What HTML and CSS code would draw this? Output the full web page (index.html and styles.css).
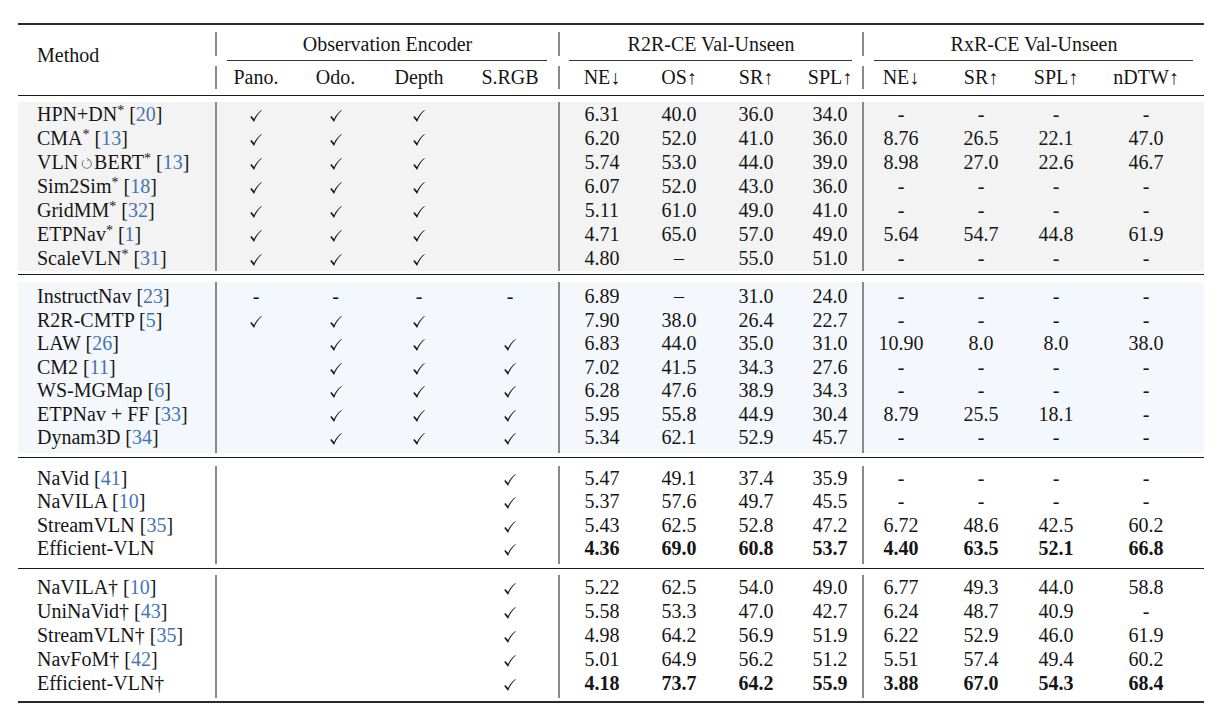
FILE: index.html
```html
<!DOCTYPE html>
<html>
<head>
<meta charset="utf-8">
<title>Results table</title>
<link rel="stylesheet" href="styles.css">
</head>
<body>
<svg class="defs" width="0" height="0">
  <defs>
    <symbol id="ck" viewBox="0 0 10 10">
      <path d="M0.2 5.8 L3.4 9.9 C4.9 5.9 7 2.6 9.8 0.4 L9.6 0.1 C6.9 1.9 4.9 4.6 3.4 7.5 L1.1 5.1 Z"/>
    </symbol>
  </defs>
</svg>
<div class="table">
  <div class="rule-top"></div>
  <div class="thead">
    <div class="h-method">Method</div>
    <div class="h-grp"><div class="lbl">Observation Encoder</div><div class="cmid c1"></div></div>
    <div class="h-grp"><div class="lbl">R2R-CE Val-Unseen</div><div class="cmid c2"></div></div>
    <div class="h-grp"><div class="lbl">RxR-CE Val-Unseen</div><div class="cmid c3"></div></div>
    <div class="h-sub b"><span>Pano.</span></div>
    <div class="h-sub"><span>Odo.</span></div>
    <div class="h-sub"><span>Depth</span></div>
    <div class="h-sub"><span>S.RGB</span></div>
    <div class="h-sub b"><span>NE↓</span></div>
    <div class="h-sub"><span>OS↑</span></div>
    <div class="h-sub"><span>SR↑</span></div>
    <div class="h-sub"><span>SPL↑</span></div>
    <div class="h-sub b"><span>NE↓</span></div>
    <div class="h-sub"><span>SR↑</span></div>
    <div class="h-sub"><span>SPL↑</span></div>
    <div class="h-sub"><span>nDTW↑</span></div>
  </div>
  <div class="rule-mid"></div>

  <div class="group g1">
    <div class="row"><div class="c m">HPN+DN<span class="ast">*</span> [<span class="ref">20</span>]</div><div class="c b"><svg class="ck"><use href="#ck"/></svg></div><div class="c"><svg class="ck"><use href="#ck"/></svg></div><div class="c"><svg class="ck"><use href="#ck"/></svg></div><div class="c"></div><div class="c b">6.31</div><div class="c">40.0</div><div class="c">36.0</div><div class="c">34.0</div><div class="c b">-</div><div class="c">-</div><div class="c">-</div><div class="c">-</div></div>
    <div class="row"><div class="c m">CMA<span class="ast">*</span> [<span class="ref">13</span>]</div><div class="c b"><svg class="ck"><use href="#ck"/></svg></div><div class="c"><svg class="ck"><use href="#ck"/></svg></div><div class="c"><svg class="ck"><use href="#ck"/></svg></div><div class="c"></div><div class="c b">6.20</div><div class="c">52.0</div><div class="c">41.0</div><div class="c">36.0</div><div class="c b">8.76</div><div class="c">26.5</div><div class="c">22.1</div><div class="c">47.0</div></div>
    <div class="row"><div class="c m">VLN<svg class="rec" viewBox="0 0 10 10"><path d="M6.8 1.3 A4.2 4.2 0 1 1 2.4 2.1" fill="none" stroke="#555" stroke-width="0.75"/><path d="M5.3 0.3 L7.1 1.3 L5.9 2.8" fill="none" stroke="#555" stroke-width="0.75"/></svg>BERT<span class="ast">*</span> [<span class="ref">13</span>]</div><div class="c b"><svg class="ck"><use href="#ck"/></svg></div><div class="c"><svg class="ck"><use href="#ck"/></svg></div><div class="c"><svg class="ck"><use href="#ck"/></svg></div><div class="c"></div><div class="c b">5.74</div><div class="c">53.0</div><div class="c">44.0</div><div class="c">39.0</div><div class="c b">8.98</div><div class="c">27.0</div><div class="c">22.6</div><div class="c">46.7</div></div>
    <div class="row"><div class="c m">Sim2Sim<span class="ast">*</span> [<span class="ref">18</span>]</div><div class="c b"><svg class="ck"><use href="#ck"/></svg></div><div class="c"><svg class="ck"><use href="#ck"/></svg></div><div class="c"><svg class="ck"><use href="#ck"/></svg></div><div class="c"></div><div class="c b">6.07</div><div class="c">52.0</div><div class="c">43.0</div><div class="c">36.0</div><div class="c b">-</div><div class="c">-</div><div class="c">-</div><div class="c">-</div></div>
    <div class="row"><div class="c m">GridMM<span class="ast">*</span> [<span class="ref">32</span>]</div><div class="c b"><svg class="ck"><use href="#ck"/></svg></div><div class="c"><svg class="ck"><use href="#ck"/></svg></div><div class="c"><svg class="ck"><use href="#ck"/></svg></div><div class="c"></div><div class="c b">5.11</div><div class="c">61.0</div><div class="c">49.0</div><div class="c">41.0</div><div class="c b">-</div><div class="c">-</div><div class="c">-</div><div class="c">-</div></div>
    <div class="row"><div class="c m">ETPNav<span class="ast">*</span> [<span class="ref">1</span>]</div><div class="c b"><svg class="ck"><use href="#ck"/></svg></div><div class="c"><svg class="ck"><use href="#ck"/></svg></div><div class="c"><svg class="ck"><use href="#ck"/></svg></div><div class="c"></div><div class="c b">4.71</div><div class="c">65.0</div><div class="c">57.0</div><div class="c">49.0</div><div class="c b">5.64</div><div class="c">54.7</div><div class="c">44.8</div><div class="c">61.9</div></div>
    <div class="row"><div class="c m">ScaleVLN<span class="ast">*</span> [<span class="ref">31</span>]</div><div class="c b"><svg class="ck"><use href="#ck"/></svg></div><div class="c"><svg class="ck"><use href="#ck"/></svg></div><div class="c"><svg class="ck"><use href="#ck"/></svg></div><div class="c"></div><div class="c b">4.80</div><div class="c">–</div><div class="c">55.0</div><div class="c">51.0</div><div class="c b">-</div><div class="c">-</div><div class="c">-</div><div class="c">-</div></div>
  </div>
  <div class="rule-mid"></div>

  <div class="group g2">
    <div class="row"><div class="c m">InstructNav [<span class="ref">23</span>]</div><div class="c b">-</div><div class="c">-</div><div class="c">-</div><div class="c">-</div><div class="c b">6.89</div><div class="c">–</div><div class="c">31.0</div><div class="c">24.0</div><div class="c b">-</div><div class="c">-</div><div class="c">-</div><div class="c">-</div></div>
    <div class="row"><div class="c m">R2R-CMTP [<span class="ref">5</span>]</div><div class="c b"><svg class="ck"><use href="#ck"/></svg></div><div class="c"><svg class="ck"><use href="#ck"/></svg></div><div class="c"><svg class="ck"><use href="#ck"/></svg></div><div class="c"></div><div class="c b">7.90</div><div class="c">38.0</div><div class="c">26.4</div><div class="c">22.7</div><div class="c b">-</div><div class="c">-</div><div class="c">-</div><div class="c">-</div></div>
    <div class="row"><div class="c m">LAW [<span class="ref">26</span>]</div><div class="c b"></div><div class="c"><svg class="ck"><use href="#ck"/></svg></div><div class="c"><svg class="ck"><use href="#ck"/></svg></div><div class="c"><svg class="ck"><use href="#ck"/></svg></div><div class="c b">6.83</div><div class="c">44.0</div><div class="c">35.0</div><div class="c">31.0</div><div class="c b">10.90</div><div class="c">8.0</div><div class="c">8.0</div><div class="c">38.0</div></div>
    <div class="row"><div class="c m">CM2 [<span class="ref">11</span>]</div><div class="c b"></div><div class="c"><svg class="ck"><use href="#ck"/></svg></div><div class="c"><svg class="ck"><use href="#ck"/></svg></div><div class="c"><svg class="ck"><use href="#ck"/></svg></div><div class="c b">7.02</div><div class="c">41.5</div><div class="c">34.3</div><div class="c">27.6</div><div class="c b">-</div><div class="c">-</div><div class="c">-</div><div class="c">-</div></div>
    <div class="row"><div class="c m">WS-MGMap [<span class="ref">6</span>]</div><div class="c b"></div><div class="c"><svg class="ck"><use href="#ck"/></svg></div><div class="c"><svg class="ck"><use href="#ck"/></svg></div><div class="c"><svg class="ck"><use href="#ck"/></svg></div><div class="c b">6.28</div><div class="c">47.6</div><div class="c">38.9</div><div class="c">34.3</div><div class="c b">-</div><div class="c">-</div><div class="c">-</div><div class="c">-</div></div>
    <div class="row"><div class="c m">ETPNav + FF [<span class="ref">33</span>]</div><div class="c b"></div><div class="c"><svg class="ck"><use href="#ck"/></svg></div><div class="c"><svg class="ck"><use href="#ck"/></svg></div><div class="c"><svg class="ck"><use href="#ck"/></svg></div><div class="c b">5.95</div><div class="c">55.8</div><div class="c">44.9</div><div class="c">30.4</div><div class="c b">8.79</div><div class="c">25.5</div><div class="c">18.1</div><div class="c">-</div></div>
    <div class="row"><div class="c m">Dynam3D [<span class="ref">34</span>]</div><div class="c b"></div><div class="c"><svg class="ck"><use href="#ck"/></svg></div><div class="c"><svg class="ck"><use href="#ck"/></svg></div><div class="c"><svg class="ck"><use href="#ck"/></svg></div><div class="c b">5.34</div><div class="c">62.1</div><div class="c">52.9</div><div class="c">45.7</div><div class="c b">-</div><div class="c">-</div><div class="c">-</div><div class="c">-</div></div>
  </div>
  <div class="rule-mid"></div>

  <div class="group g3">
    <div class="row"><div class="c m">NaVid [<span class="ref">41</span>]</div><div class="c b"></div><div class="c"></div><div class="c"></div><div class="c"><svg class="ck"><use href="#ck"/></svg></div><div class="c b">5.47</div><div class="c">49.1</div><div class="c">37.4</div><div class="c">35.9</div><div class="c b">-</div><div class="c">-</div><div class="c">-</div><div class="c">-</div></div>
    <div class="row"><div class="c m">NaVILA [<span class="ref">10</span>]</div><div class="c b"></div><div class="c"></div><div class="c"></div><div class="c"><svg class="ck"><use href="#ck"/></svg></div><div class="c b">5.37</div><div class="c">57.6</div><div class="c">49.7</div><div class="c">45.5</div><div class="c b">-</div><div class="c">-</div><div class="c">-</div><div class="c">-</div></div>
    <div class="row"><div class="c m">StreamVLN [<span class="ref">35</span>]</div><div class="c b"></div><div class="c"></div><div class="c"></div><div class="c"><svg class="ck"><use href="#ck"/></svg></div><div class="c b">5.43</div><div class="c">62.5</div><div class="c">52.8</div><div class="c">47.2</div><div class="c b">6.72</div><div class="c">48.6</div><div class="c">42.5</div><div class="c">60.2</div></div>
    <div class="row"><div class="c m">Efficient-VLN</div><div class="c b"></div><div class="c"></div><div class="c"></div><div class="c"><svg class="ck"><use href="#ck"/></svg></div><div class="c b bd">4.36</div><div class="c bd">69.0</div><div class="c bd">60.8</div><div class="c bd">53.7</div><div class="c b bd">4.40</div><div class="c bd">63.5</div><div class="c bd">52.1</div><div class="c bd">66.8</div></div>
  </div>
  <div class="rule-mid"></div>

  <div class="group g4">
    <div class="row"><div class="c m">NaVILA† [<span class="ref">10</span>]</div><div class="c b"></div><div class="c"></div><div class="c"></div><div class="c"><svg class="ck"><use href="#ck"/></svg></div><div class="c b">5.22</div><div class="c">62.5</div><div class="c">54.0</div><div class="c">49.0</div><div class="c b">6.77</div><div class="c">49.3</div><div class="c">44.0</div><div class="c">58.8</div></div>
    <div class="row"><div class="c m">UniNaVid† [<span class="ref">43</span>]</div><div class="c b"></div><div class="c"></div><div class="c"></div><div class="c"><svg class="ck"><use href="#ck"/></svg></div><div class="c b">5.58</div><div class="c">53.3</div><div class="c">47.0</div><div class="c">42.7</div><div class="c b">6.24</div><div class="c">48.7</div><div class="c">40.9</div><div class="c">-</div></div>
    <div class="row"><div class="c m">StreamVLN† [<span class="ref">35</span>]</div><div class="c b"></div><div class="c"></div><div class="c"></div><div class="c"><svg class="ck"><use href="#ck"/></svg></div><div class="c b">4.98</div><div class="c">64.2</div><div class="c">56.9</div><div class="c">51.9</div><div class="c b">6.22</div><div class="c">52.9</div><div class="c">46.0</div><div class="c">61.9</div></div>
    <div class="row"><div class="c m">NavFoM† [<span class="ref">42</span>]</div><div class="c b"></div><div class="c"></div><div class="c"></div><div class="c"><svg class="ck"><use href="#ck"/></svg></div><div class="c b">5.01</div><div class="c">64.9</div><div class="c">56.2</div><div class="c">51.2</div><div class="c b">5.51</div><div class="c">57.4</div><div class="c">49.4</div><div class="c">60.2</div></div>
    <div class="row"><div class="c m">Efficient-VLN†</div><div class="c b"></div><div class="c"></div><div class="c"></div><div class="c"><svg class="ck"><use href="#ck"/></svg></div><div class="c b bd">4.18</div><div class="c bd">73.7</div><div class="c bd">64.2</div><div class="c bd">55.9</div><div class="c b bd">3.88</div><div class="c bd">67.0</div><div class="c bd">54.3</div><div class="c bd">68.4</div></div>
  </div>
  <div class="rule-bottom"></div>
</div>
</body>
</html>
```
FILE: styles.css
```css
:root {
  --cols: 197px 80px 81px 86px 96px 86px 70px 84px 64px 76px 86px 64px 116px;
  --bar: 2px solid #8a8a8a;
}
html, body {
  margin: 0;
  background: #ffffff;
}
body {
  font-family: "Liberation Serif", "Times New Roman", serif;
  font-size: 20px;
  color: #161616;
}
.defs {
  position: absolute;
  width: 0;
  height: 0;
}
.table {
  width: 1186px;
  margin: 23px 0 0 18px;
}
.rule-top,
.rule-bottom {
  border-top: 2px solid #2a2a2a;
}
.rule-mid {
  border-top: 1px solid #1a1a1a;
}

/* header */
.thead {
  display: grid;
  grid-template-columns: var(--cols);
}
.h-method {
  grid-row: 1 / 3;
  padding: 18px 0 0 19px;
  line-height: 24px;
}
.h-grp {
  grid-column: span 4;
  padding-top: 7px;
}
.h-grp .lbl {
  height: 24px;
  line-height: 24px;
  text-align: center;
  border-left: var(--bar);
}
.h-grp .cmid {
  margin-top: 4px;
  border-top: 1px solid #333;
}
.cmid.c1 { margin-left: 12px; margin-right: 11px; }
.cmid.c2 { margin-left: 11px; margin-right: 10px; }
.cmid.c3 { margin-left: 12px; margin-right: 11px; }
.h-sub {
  padding: 5px 0 6px;
}
.h-sub span {
  display: block;
  height: 23px;
  line-height: 23px;
  text-align: center;
}
.h-sub.b span {
  border-left: var(--bar);
}

/* body groups */
.group {
  --rh: 24px;
  display: flex;
  flex-direction: column;
}
.g1 { margin: 6px 0 3px; background: #f3f3f3; }
.g1 .row:last-child .c { padding-bottom: 1px; }
.g2 { --rh: 23.5px; margin: 7px 0 4px; background: #f4f8fc; }
.g2 .row:first-child .c { padding-top: 3px; }
.g2 .row:last-child .c { padding-bottom: 3px; }
.g3 { --rh: 23.4px; margin: 8px 0 4px; }
.g3 .row:first-child .c { padding-top: 1.5px; }
.g3 .row:last-child .c { padding-bottom: 3px; }
.g4 { margin: 6px 0 3px; }
.g4 .row:last-child .c { padding-bottom: 3px; }

.row {
  display: grid;
  grid-template-columns: var(--cols);
}
.c {
  height: var(--rh);
  line-height: var(--rh);
  text-align: center;
  white-space: nowrap;
}
.c.m {
  text-align: left;
  padding-left: 19px;
}
.c.b {
  border-left: var(--bar);
}
.bd {
  font-weight: bold;
}
.ref {
  color: #4474b4;
}
.ast {
  font-size: 14px;
  vertical-align: 6px;
  line-height: 0;
}
.ck {
  width: 12px;
  height: 12px;
  fill: #161616;
  vertical-align: -1px;
}
.rec {
  width: 11px;
  height: 11px;
  margin: 0 2px 0 3px;
  vertical-align: 0px;
}
```
